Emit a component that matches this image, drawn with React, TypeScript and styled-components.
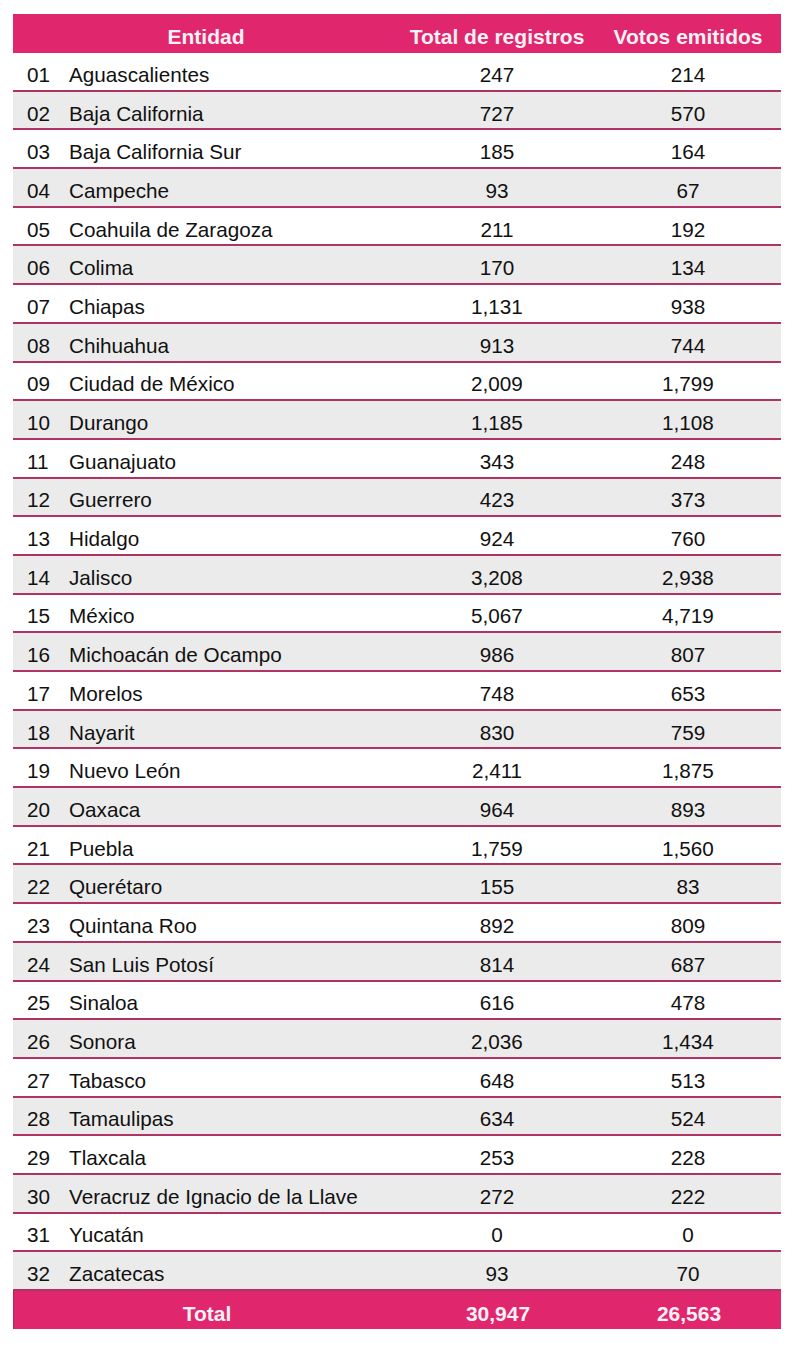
import React from "react";
import styled, { createGlobalStyle } from "styled-components";

const rows: [string, string, string, string][] = [
  ["01", "Aguascalientes", "247", "214"],
  ["02", "Baja California", "727", "570"],
  ["03", "Baja California Sur", "185", "164"],
  ["04", "Campeche", "93", "67"],
  ["05", "Coahuila de Zaragoza", "211", "192"],
  ["06", "Colima", "170", "134"],
  ["07", "Chiapas", "1,131", "938"],
  ["08", "Chihuahua", "913", "744"],
  ["09", "Ciudad de México", "2,009", "1,799"],
  ["10", "Durango", "1,185", "1,108"],
  ["11", "Guanajuato", "343", "248"],
  ["12", "Guerrero", "423", "373"],
  ["13", "Hidalgo", "924", "760"],
  ["14", "Jalisco", "3,208", "2,938"],
  ["15", "México", "5,067", "4,719"],
  ["16", "Michoacán de Ocampo", "986", "807"],
  ["17", "Morelos", "748", "653"],
  ["18", "Nayarit", "830", "759"],
  ["19", "Nuevo León", "2,411", "1,875"],
  ["20", "Oaxaca", "964", "893"],
  ["21", "Puebla", "1,759", "1,560"],
  ["22", "Querétaro", "155", "83"],
  ["23", "Quintana Roo", "892", "809"],
  ["24", "San Luis Potosí", "814", "687"],
  ["25", "Sinaloa", "616", "478"],
  ["26", "Sonora", "2,036", "1,434"],
  ["27", "Tabasco", "648", "513"],
  ["28", "Tamaulipas", "634", "524"],
  ["29", "Tlaxcala", "253", "228"],
  ["30", "Veracruz de Ignacio de la Llave", "272", "222"],
  ["31", "Yucatán", "0", "0"],
  ["32", "Zacatecas", "93", "70"],
];

const GlobalStyle = createGlobalStyle`
  body {
    margin: 0;
    background: #ffffff;
    font-family: "Liberation Sans", Arial, sans-serif;
  }
`;

const Page = styled.div`
  padding: 14px 19px 0 13px;
`;

const Table = styled.div`
  width: 768px;
`;

const Grid = `
  display: grid;
  grid-template-columns: 56px 330px 196px 186px;
  align-items: center;
  box-sizing: border-box;
`;

const HeadRow = styled.div`
  ${Grid}
  height: 39px;
  padding-top: 6px;
  background: #e0266c;
  color: #fdf1f6;
  font-weight: 700;
  font-size: 21px;
`;

const TotalRow = styled(HeadRow)`
  height: 38px;
  padding-top: 7px;
  border-left: 1px solid #a82a58;
`;

const HeadCell = styled.div<{ $span?: boolean }>`
  text-align: center;
  grid-column: ${(p) => (p.$span ? "1 / span 2" : "auto")};
`;

const Row = styled.div<{ $shade: boolean }>`
  ${Grid}
  height: 38.7px;
  padding-top: 7px;
  background: ${(p) => (p.$shade ? "#ebebeb" : "#ffffff")};
  border-bottom: 2px solid #b03366;
  color: #111111;
  font-size: 20.7px;
`;

const Num = styled.div`
  padding-left: 14px;
`;

const Name = styled.div`
  white-space: nowrap;
`;

const Value = styled.div`
  text-align: center;
`;

export default function App() {
  return (
    <Page>
      <GlobalStyle />
      <Table>
        <HeadRow>
          <HeadCell $span>Entidad</HeadCell>
          <HeadCell>Total de registros</HeadCell>
          <HeadCell>Votos emitidos</HeadCell>
        </HeadRow>
        {rows.map(([n, name, total, votos], i) => (
          <Row key={n} $shade={i % 2 === 1}>
            <Num>{n}</Num>
            <Name>{name}</Name>
            <Value>{total}</Value>
            <Value>{votos}</Value>
          </Row>
        ))}
        <TotalRow>
          <HeadCell $span>Total</HeadCell>
          <HeadCell>30,947</HeadCell>
          <HeadCell>26,563</HeadCell>
        </TotalRow>
      </Table>
    </Page>
  );
}
